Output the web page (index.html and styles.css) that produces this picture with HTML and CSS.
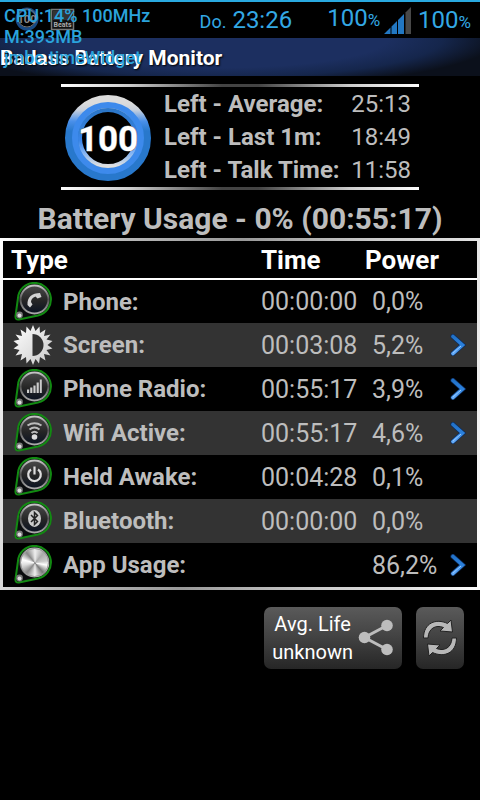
FILE: index.html
```html
<!DOCTYPE html>
<html lang="en">
<head>
<meta charset="utf-8">
<meta name="viewport" content="width=device-width, initial-scale=1">
<title>Badass Battery Monitor</title>
<link rel="stylesheet" href="styles.css">
</head>
<body>
<svg class="defs" aria-hidden="true">
  <defs>
    <linearGradient id="rim" x1="0" y1="0" x2="0" y2="1"><stop offset="0" stop-color="#c4c4c4"/><stop offset=".5" stop-color="#555"/><stop offset="1" stop-color="#a8a8a8"/></linearGradient>
    <linearGradient id="face" x1="0" y1="0" x2="0" y2="1"><stop offset="0" stop-color="#4a4a4a"/><stop offset=".55" stop-color="#252525"/><stop offset="1" stop-color="#0a1222"/></linearGradient>
    <linearGradient id="ring" x1="0" y1="0" x2="0" y2="1"><stop offset="0" stop-color="#dcdcdc"/><stop offset=".1" stop-color="#c8d0dc"/><stop offset=".26" stop-color="#4a90ea"/><stop offset=".4" stop-color="#2878cc"/><stop offset="1" stop-color="#2878cc"/></linearGradient>
    <linearGradient id="lip" x1="0" y1="0" x2="0" y2="1"><stop offset="0" stop-color="#2b76c8"/><stop offset=".55" stop-color="#3a86e8"/><stop offset=".75" stop-color="#7cb0f4"/><stop offset="1" stop-color="#e0e0e0"/></linearGradient>
    <linearGradient id="sun" x1="0" y1="0" x2="1" y2="1"><stop offset="0" stop-color="#fff"/><stop offset="1" stop-color="#c8c8c8"/></linearGradient>
    <linearGradient id="arrow" x1="0" y1="0" x2="0" y2="1"><stop offset="0" stop-color="#2272c8"/><stop offset=".5" stop-color="#2b80dc"/><stop offset="1" stop-color="#62aaf8"/></linearGradient>
    <g id="badge">
      <path d="M2.500 34 5 16A16.500 16.500 0 1 1 25 33.500L6 37.500Q2 38 2.500 34Z" fill="#0a0c0e" stroke="#128a12" stroke-width="2"/>
      <circle cx="21.500" cy="17.500" r="14" fill="url(#face)" stroke="url(#rim)" stroke-width="2"/>
      <circle cx="6.500" cy="33" r="3.400" fill="#777"/><circle cx="6.500" cy="33.500" r="2" fill="#ddd"/>
    </g>
    <g id="chevron"><path d="M3 2.500 12.500 11 3 19.500" fill="none" stroke="#0c2c5c" stroke-width="5" stroke-linecap="round"/><path d="M3 2.500 12.500 11 3 19.500" fill="none" stroke="url(#arrow)" stroke-width="3.600" stroke-linecap="round"/><path d="M3 19 11 12" stroke="#9ccaff" stroke-width="1"/></g>
  </defs>
</svg>

<header class="status">
  <svg class="tray" viewBox="0 0 60 26" aria-hidden="true">
    <circle cx="12" cy="12" r="10" fill="none" stroke="#174a86" stroke-width="3"/><circle cx="12" cy="11" r="9" fill="none" stroke="#777" stroke-width="1"/>
    <text x="12" y="16" text-anchor="middle" font-size="11" font-weight="bold" fill="#888">100</text>
    <rect x="36.500" y="2.500" width="22" height="20" fill="#111" stroke="#777" stroke-width="1.500"/><rect x="38" y="4" width="19" height="9" fill="#333"/>
    <text x="47.500" y="20" text-anchor="middle" font-size="7" font-weight="bold" fill="#aaa">Beats</text>
  </svg>
  <span class="clock"><small>Do.</small> 23:26</span>
  <span class="level raised">100<small class="pct">%</small></span>
  <svg class="signal" viewBox="0 0 27 27" aria-hidden="true"><path d="M0 27 6.500 20.500V27ZM7.500 19.500 13 14V27H7.500ZM14 13 20 7V27H14Z" fill="#2277c2"/><path d="M21.500 5.500 27 0V27H21.500Z" fill="#484848"/></svg>
  <span class="level">100<small class="pct">%</small></span>
</header>

<h1 class="titlebar">Badass Battery Monitor</h1>
<p class="widget">CPU:14% 100MHz<br>M:393MB<br>jmbc.timeWidget</p>

<main>
  <section class="summary">
    <svg class="gauge" viewBox="0 0 88 88" role="img" aria-label="Charge 100">
      <circle cx="44" cy="44" r="35" fill="#000" stroke="url(#ring)" stroke-width="16"/>
      <circle cx="44" cy="44" r="33" fill="none" stroke="#3d8aec" stroke-width="6"/>
      <circle cx="44" cy="44" r="28" fill="none" stroke="url(#lip)" stroke-width="4"/>
      <text x="44" y="57" text-anchor="middle" font-size="35" font-weight="bold" class="gauge-num">100</text>
    </svg>
    <dl class="stats">
      <dt>Left - Average:</dt><dd>25:13</dd>
      <dt>Left - Last 1m:</dt><dd>18:49</dd>
      <dt>Left - Talk Time:</dt><dd>11:58</dd>
    </dl>
  </section>

  <h2>Battery Usage - 0% (00:55:17)</h2>

  <div class="frame">
  <table class="usage">
    <colgroup><col class="c-icon"><col><col class="c-time"><col class="c-power"><col class="c-more"></colgroup>
    <thead><tr><th colspan="2" scope="col">Type</th><th scope="col">Time</th><th colspan="2" scope="col">Power</th></tr></thead>
    <tbody>
      <tr><td><svg class="icon" viewBox="0 0 40 40"><use href="#badge"/><path d="M14.500 23C14 15 19 11 27 11L28.500 15 24.500 16.500 22.500 14.500C19.500 15.500 18 17.500 18 20L19.500 22.500 17 25.500Z" fill="#d4d4d4"/></svg></td><th scope="row">Phone:</th><td>00:00:00</td><td>0,0%</td><td></td></tr>
      <tr><td><svg class="icon" viewBox="0 0 40 40"><path fill="url(#sun)" d="M20 0 22.500 6 26.500 1.500 27 8 32.500 4.500 31 11 37.500 9.500 33.500 14.500 39.500 16 34.500 20 39.500 23.500 33.500 25 37.500 30.500 31 29 32.500 35.500 27 32 26 38.500 22.500 34 20 40 17.500 34 13.500 38.500 13 32 7.500 35.500 9 29 2.500 30.500 6.500 25 .5 23.500 5.500 20 .5 16 6.500 14.500 2.500 9.500 9 11 7.500 4.500 13 8 13.500 1.500 17.500 6Z"/><path d="M19.500 9A11 11 0 0 1 19.500 31Z" fill="#333"/></svg></td><th scope="row">Screen:</th><td>00:03:08</td><td>5,2%</td><td><a href="#screen" aria-label="Screen details"><svg viewBox="0 0 16 22"><use href="#chevron"/></svg></a></td></tr>
      <tr><td><svg class="icon" viewBox="0 0 40 40"><use href="#badge"/><path d="M14 20.500h2.200V24H14ZM17.200 18.500h2.200V24h-2.200ZM20.400 16.500h2.200V24h-2.200ZM23.600 13.500h2.200V24h-2.200ZM26.800 10.500h2V24h-2Z" fill="#ccc"/></svg></td><th scope="row">Phone Radio:</th><td>00:55:17</td><td>3,9%</td><td><a href="#radio" aria-label="Phone Radio details"><svg viewBox="0 0 16 22"><use href="#chevron"/></svg></a></td></tr>
      <tr><td><svg class="icon" viewBox="0 0 40 40"><use href="#badge"/><path d="M14.500 12.500Q21.500 8 28.500 12.500M16.500 16.500Q21.500 12.500 26.500 16.500M18.500 20Q21.500 17.500 24.500 20" fill="none" stroke="#bbb" stroke-width="2"/><circle cx="21.500" cy="24" r="2.800" fill="#ddd"/></svg></td><th scope="row">Wifi Active:</th><td>00:55:17</td><td>4,6%</td><td><a href="#wifi" aria-label="Wifi details"><svg viewBox="0 0 16 22"><use href="#chevron"/></svg></a></td></tr>
      <tr><td><svg class="icon" viewBox="0 0 40 40"><use href="#badge"/><path d="M18 12.500A6.300 6.300 0 1 0 25 12.500M21.500 9.500V17.500" fill="none" stroke="#ddd" stroke-width="2.200"/></svg></td><th scope="row">Held Awake:</th><td>00:04:28</td><td>0,1%</td><td></td></tr>
      <tr><td><svg class="icon" viewBox="0 0 40 40"><use href="#badge"/><ellipse cx="21.500" cy="17.500" rx="6.500" ry="8.500" fill="#ccc"/><path d="M18 14 24.500 20.500 21.500 23.500V11.500L24.500 14.500 18 21" fill="none" stroke="#222" stroke-width="1.500"/></svg></td><th scope="row">Bluetooth:</th><td>00:00:00</td><td>0,0%</td><td></td></tr>
      <tr><td><svg class="icon" viewBox="0 0 40 40"><use href="#badge"/><circle cx="21.500" cy="17.500" r="14" class="metal"/><foreignObject x="7.500" y="3.500" width="28" height="28"><div class="brushed"></div></foreignObject><circle cx="21.500" cy="17.500" r="14" fill="none" stroke="#999"/></svg></td><th scope="row">App Usage:</th><td></td><td>86,2%</td><td><a href="#apps" aria-label="App Usage details"><svg viewBox="0 0 16 22"><use href="#chevron"/></svg></a></td></tr>
    </tbody>
  </table>
  </div>

  <div class="actions">
    <button type="button" class="share"><span>Avg. Life<br>unknown</span>
      <svg viewBox="0 0 36 38" aria-hidden="true"><path d="M29 6.500 6.500 18.500 29 30.500" fill="none" stroke="#bdbdbd" stroke-width="3"/><g fill="#bdbdbd"><circle cx="29" cy="6.500" r="5.800"/><circle cx="6.500" cy="18.500" r="5.800"/><circle cx="29" cy="30.500" r="5.800"/></g></svg>
    </button>
    <button type="button" class="refresh" aria-label="Refresh">
      <svg viewBox="0 0 36 38" aria-hidden="true"><g stroke="#222" stroke-width="1" fill="#b8b8b8"><path id="spin" d="M1.500 19C1.500 4 14-1 25.500 4.500L29 1 30.500 13 18 12 21.500 8.500C14 5.500 6.500 9 6 19Z"/><use href="#spin" transform="rotate(180 18 19)"/></g></svg>
    </button>
  </div>
</main>
</body>
</html>
```
FILE: styles.css
```css
* { box-sizing: border-box; }

body {
  margin: 0;
  min-height: 100vh;
  position: relative;
  background: #000;
  color: #bdbdbd;
  font-family: Roboto, "Liberation Sans", sans-serif;
}

svg { display: block; }
.defs { position: absolute; width: 0; height: 0; }

.status {
  display: flex;
  align-items: center;
  height: 38px;
  padding: 0 9px 0 15px;
  border-top: 2px solid #29a9e0;
  color: #33a8e4;
  font-size: 24px;
}
.status small { font-size: 18px; }
.status .pct { font-size: 17px; }
.tray { width: 60px; height: 26px; }
.clock { margin-left: auto; margin-right: 35px; }
.raised { padding-bottom: 4px; }
.signal { width: 27px; height: 27px; margin: 0 7px 0 4px; }

.titlebar {
  margin: 0;
  height: 38px;
  color: #fff;
  font-size: 21px;
  line-height: 40px;
  background:
    radial-gradient(ellipse 58% 130% at 46% 0, #1c2f60 0 60%, #15264c 80%, transparent 100%),
    #0b101b;
  text-shadow: 1px 1px 2px #000;
}

.widget {
  position: absolute;
  top: 5px;
  left: 4px;
  margin: 0;
  color: #2aa3dc;
  font-size: 18px;
  font-weight: 500;
  line-height: 21px;
}

.summary {
  display: flex;
  align-items: center;
  width: 358px;
  max-width: 100%;
  margin: 8px auto 0;
  padding: 1px 8px 0 3px;
  border: solid;
  border-width: 3px 0;
  border-image: linear-gradient(90deg, #fff, #ccc 20%, #444 45%, #444 55%, #ccc 80%, #fff) 3;
}
.gauge { width: 88px; height: 88px; flex: none; }
.gauge-num { fill: #fff; stroke: #777; stroke-width: 1px; paint-order: stroke; }
.metal { fill: #aaa; }
.brushed {
  width: 28px;
  height: 28px;
  border-radius: 50%;
  background: conic-gradient(#eee, #aaa 40deg, #ccc 80deg, #fff 100deg, #777 140deg, #eee 180deg, #888 220deg, #ddd 260deg, #fff 285deg, #888 320deg, #eee);
}

.stats {
  flex: 1;
  display: grid;
  grid-template-columns: 1fr auto;
  margin: 0 0 0 12px;
  font-size: 24px;
  line-height: 33px;
}
.stats dt { font-weight: 700; white-space: nowrap; }
.stats dd { margin: 0; }

h2 {
  margin: 9px 0 0;
  font-size: 30px;
  line-height: 39px;
  text-align: center;
}

.frame {
  padding: 3px;
  background: linear-gradient(100deg, #fff, #bbb 20%, #999 45%, #ccc 70%, #ddd 85%, #fff);
}
.usage {
  width: 100%;
  table-layout: fixed;
  border-collapse: collapse;
  background: #000;
  font-size: 24px;
}
.c-icon { width: 60px; }
.c-time { width: 104px; }
.c-power { width: 80px; }
.c-more { width: 32px; }
.usage th, .usage td { padding: 0; text-align: left; }
.usage thead th {
  height: 38px;
  border-bottom: 2px solid #fff;
  color: #fff;
  font-size: 26px;
}
.usage thead th:first-child { padding-left: 8px; }
.usage tbody tr { height: 44px; }
.usage tbody tr:nth-child(even) { background: #333; }
.usage tbody td { font-size: 25px; }
.usage tbody td:nth-child(4) { padding-left: 7px; }
.usage td:first-child { padding-left: 10px; }
.icon { width: 40px; height: 40px; }
.usage a svg { width: 16px; height: 22px; margin-left: 5px; }

.actions {
  display: flex;
  justify-content: flex-end;
  gap: 14px;
  padding: 17px 16px;
}
.actions button {
  display: flex;
  align-items: center;
  justify-content: center;
  height: 62px;
  padding: 0 8px;
  border: 0;
  border-radius: 7px;
  background: linear-gradient(#5a5a5a, #444 45%, #262626);
  color: #fff;
  font: 20px/28px Roboto, "Liberation Sans", sans-serif;
}
.actions svg { width: 36px; height: 38px; flex: none; }
.share { gap: 5px; }
.actions .refresh { width: 48px; padding: 0; }
```
